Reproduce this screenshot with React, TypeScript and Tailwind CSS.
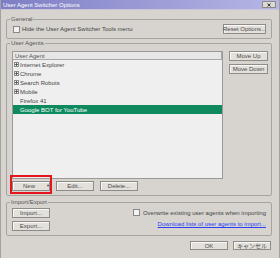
import type { ReactNode } from 'react';

const agents = [
  { name: 'Internet Explorer', folder: true },
  { name: 'Chrome', folder: true },
  { name: 'Search Robots', folder: true },
  { name: 'Mobile', folder: true },
  { name: 'Firefox 41', folder: false },
  { name: 'Google BOT for YouTube', folder: false, selected: true },
];

function Btn({ children, className = '' }: { children: ReactNode; className?: string }) {
  return (
    <button
      className={`flex items-center justify-center whitespace-nowrap border border-[#8f8c88] bg-[#e3e0dc] shadow-[inset_1px_1px_0_#f8f8f8] text-[6px] leading-none text-[#4a4a4a] ${className}`}
    >
      {children}
    </button>
  );
}

function Check() {
  return <span className="block w-[7px] h-[7px] shrink-0 border border-[#8a8784] bg-[#f2f2f2]" />;
}

function Group({ title, className = '', children }: { title: string; className?: string; children: ReactNode }) {
  return (
    <fieldset className={`w-[266px] border border-[#a7a4a0] rounded-[2px] ${className}`}>
      <legend className="ml-[3px] px-[1px] text-[6px] leading-[8px] text-[#555]">{title}</legend>
      {children}
    </fieldset>
  );
}

function Expander() {
  return (
    <svg width="5" height="5" viewBox="0 0 5 5" className="shrink-0">
      <rect x="0.5" y="0.5" width="4" height="4" fill="#f6f6f6" stroke="#8a8a8a" strokeWidth="1" />
      <path d="M1 2.5H4M2.5 1V4" stroke="#444" strokeWidth="0.8" />
    </svg>
  );
}

export default function App() {
  return (
    <div className="w-[280px] h-[258px] overflow-hidden bg-[#d7d4d0] border-x border-[#a4a19d] font-['Liberation_Sans','Noto_Sans_CJK_JP',sans-serif] text-[#444]">
      {/* title bar */}
      <div className="flex items-center justify-between h-[10px] pl-[2px] pr-[3px] bg-gradient-to-r from-[#7e7ec4] to-[#b6b6e6] border-b border-[#c9c6d8]">
        <span className="text-[6px] leading-none text-white">User Agent Switcher Options</span>
        <span className="flex items-center justify-center w-[14px] h-[7px] bg-[#dcd9d5] border border-[#8c8a88]">
          <svg width="4" height="4" viewBox="0 0 4 4">
            <path d="M0.5 0.5L3.5 3.5M3.5 0.5L0.5 3.5" stroke="#222" strokeWidth="0.9" />
          </svg>
        </span>
      </div>

      <div className="px-[5px]">
        <Group title="General" className="mt-[5px]">
          <div className="flex items-center justify-between pl-[6px] pr-[5px] pt-[1px] pb-[4px]">
            <label className="flex items-center gap-[2px] text-[6px] leading-none">
              <Check />
              <span>Hide the User Agent Switcher Tools menu</span>
            </label>
            <Btn className="w-[43px] h-[10px]">Reset Options...</Btn>
          </div>
        </Group>

        <Group title="User Agents">
          <div className="pl-[5px] pr-[3px] pt-[4px] pb-[4px]">
            <div className="flex gap-[6px]">
              <div className="w-[211px] h-[128px] border border-[#9b9895] bg-[#efefef]">
                <div className="flex h-[8px] items-center border-b border-r border-[#a8a8a8] bg-[#e6e6e6] pl-[2px] text-[6px] leading-none text-[#555]">
                  User Agent
                </div>
                {agents.map((a) => (
                  <div
                    key={a.name}
                    className={`flex items-center gap-[1px] h-[9px] pl-[1px] text-[6px] leading-none ${
                      a.selected ? 'bg-[#0f8a5e] text-white' : 'text-[#444]'
                    }`}
                  >
                    {a.folder ? <Expander /> : <span className="w-[5px] shrink-0" />}
                    <span>{a.name}</span>
                  </div>
                ))}
              </div>
              <div className="flex flex-col gap-[3px]">
                <Btn className="w-[39px] h-[10px]">Move Up</Btn>
                <Btn className="w-[39px] h-[10px]">Move Down</Btn>
              </div>
            </div>
            <div className="flex gap-[6px] mt-[2px]">
              <div className="relative">
                <Btn className="w-[38px] h-[10px] !justify-start pl-[10px]">
                  <span>New</span>
                  <span className="ml-[11px] text-[4px]">▼</span>
                </Btn>
                {/* highlight */}
                <div className="absolute -left-[2px] -right-[2px] -top-[6px] -bottom-[3px] border-2 border-[#e4161c]" />
              </div>
              <Btn className="w-[38px] h-[10px]">Edit...</Btn>
              <Btn className="w-[38px] h-[10px]">Delete...</Btn>
            </div>
          </div>
        </Group>

        <Group title="Import/Export" className="mt-[2px]">
          <div className="flex pl-[5px] pr-[5px] pt-[2px] pb-[4px]">
            <div className="flex flex-col gap-[3px]">
              <Btn className="w-[38px] h-[10px]">Import...</Btn>
              <Btn className="w-[38px] h-[10px]">Export...</Btn>
            </div>
            <div className="ml-auto flex flex-col items-end gap-[5px] pt-[1px]">
              <label className="flex items-center gap-[3px] text-[6px] leading-none">
                <Check />
                <span>Overwrite existing user agents when importing</span>
              </label>
              <a className="text-[6px] leading-none text-[#2b3ff0] underline">
                Download lists of user agents to import...
              </a>
            </div>
          </div>
        </Group>

        <div className="flex justify-end gap-[5px] mt-[5px] pr-[3px]">
          <Btn className="w-[38px] h-[9px]">OK</Btn>
          <Btn className="w-[38px] h-[9px]">キャンセル</Btn>
        </div>
      </div>
    </div>
  );
}
